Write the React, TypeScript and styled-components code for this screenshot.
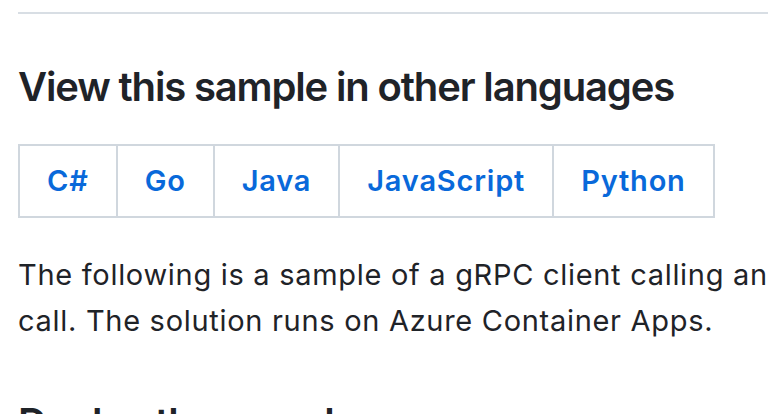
import React from "react";
import styled, { createGlobalStyle } from "styled-components";

const GlobalStyle = createGlobalStyle`
  html, body {
    margin: 0;
    padding: 0;
    background: #ffffff;
    overflow: hidden;
  }
  body {
    font-family: Inter, "Noto Sans", "Liberation Sans", sans-serif;
    color: #1f2328;
  }
`;

const Page = styled.article`
  width: 1320px;
  padding: 12px 0 0 18px;
  font-size: 29px;
  line-height: 46px;
  letter-spacing: 0.7px;
`;

const Rule = styled.div`
  height: 2px;
  background: #d8dee4;
`;

const Heading = styled.h3<{ $top?: number }>`
  margin: ${(p) => p.$top ?? 47}px 0 31px;
  font-size: 40px;
  line-height: 52px;
  font-weight: 600;
  letter-spacing: -1.15px;
  color: #1f2328;
`;

const LangTable = styled.table`
  border-collapse: collapse;
  border-spacing: 0;
  margin: 0 0 34px;
`;

const Cell = styled.th`
  border: 2px solid #d0d7de;
  padding: 12px 27px;
  font-weight: 600;
  letter-spacing: 0.8px;
  text-align: center;
`;

const LangLink = styled.a`
  color: #0969da;
  text-decoration: none;
`;

const Paragraph = styled.p`
  margin: 0;
`;

const languages = ["C#", "Go", "Java", "JavaScript", "Python"];

export default function App() {
  return (
    <>
      <GlobalStyle />
      <Page>
        <Rule />
        <Heading>View this sample in other languages</Heading>
        <LangTable>
          <thead>
            <tr>
              {languages.map((lang) => (
                <Cell key={lang}>
                  <LangLink href="#">{lang}</LangLink>
                </Cell>
              ))}
            </tr>
          </thead>
        </LangTable>
        <Paragraph>
          The following is a sample of a gRPC client calling and receiving a
          response from a unary call. The solution runs on Azure Container
          Apps.
        </Paragraph>
        <Heading $top={53}>Deploy the sample</Heading>
      </Page>
    </>
  );
}
